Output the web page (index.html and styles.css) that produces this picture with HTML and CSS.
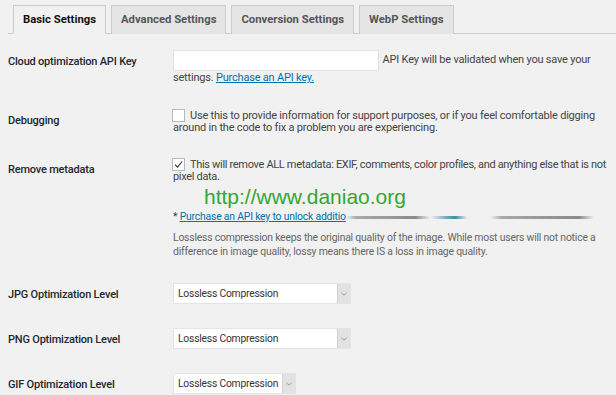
FILE: index.html
```html
<!DOCTYPE html>
<html>
<head>
  <title>Image Optimizer Settings</title>
  <link rel="stylesheet" href="styles.css">
</head>
<body>
  <div class="wrap">
    <nav class="tabs">
      <a class="tab active">Basic Settings</a>
      <a class="tab">Advanced Settings</a>
      <a class="tab">Conversion Settings</a>
      <a class="tab">WebP Settings</a>
    </nav>

    <div class="form">
      <div class="row">
        <div class="label">Cloud optimization API Key</div>
        <div class="field api">
          <input class="text-input" type="text"> API Key will be validated when you save your settings. <a class="link">Purchase an API key.</a>
        </div>
      </div>

      <div class="row">
        <div class="label">Debugging</div>
        <div class="field">
          <span class="checkbox"></span>Use this to provide information for support purposes, or if you feel comfortable digging around in the code to fix a problem you are experiencing.
        </div>
      </div>

      <div class="row">
        <div class="label">Remove metadata</div>
        <div class="field">
          <span class="checkbox"><svg width="11" height="11" viewBox="0 0 11 11"><path d="M2 5.7 L4.5 8.1 L9.1 2.5" fill="none" stroke="#333" stroke-width="1.1"/></svg></span><span class="tight">This will remove ALL metadata: EXIF, comments, color profiles, and anything else that is not pixel data.</span>
          <div class="watermark">http://www.daniao.org</div>
          <div class="note">* <a class="link">Purchase an API key to unlock additio</a><span class="smear"></span></div>
          <p class="desc">Lossless compression keeps the original quality of the image. While most users will not notice a difference in image quality, lossy means there IS a loss in image quality.</p>
        </div>
      </div>

      <div class="row">
        <div class="label">JPG Optimization Level</div>
        <div class="field">
          <div class="select"><span class="select-text">Lossless Compression</span><span class="arrow"><svg width="6" height="4" viewBox="0 0 6 4"><path d="M0.5 0.8 L3 3.2 L5.5 0.8" fill="none" stroke="#999" stroke-width="1"/></svg></span></div>
        </div>
      </div>

      <div class="row">
        <div class="label">PNG Optimization Level</div>
        <div class="field">
          <div class="select"><span class="select-text">Lossless Compression</span><span class="arrow"><svg width="6" height="4" viewBox="0 0 6 4"><path d="M0.5 0.8 L3 3.2 L5.5 0.8" fill="none" stroke="#999" stroke-width="1"/></svg></span></div>
        </div>
      </div>

      <div class="row">
        <div class="label">GIF Optimization Level</div>
        <div class="field">
          <div class="select small"><span class="select-text">Lossless Compression</span><span class="arrow"><svg width="6" height="4" viewBox="0 0 6 4"><path d="M0.5 0.8 L3 3.2 L5.5 0.8" fill="none" stroke="#999" stroke-width="1"/></svg></span></div>
        </div>
      </div>
    </div>
  </div>
</body>
</html>
```

FILE: styles.css
```css
body {
  margin: 0;
  background-color: #f1f1f1;
  font-family: Roboto, "Open Sans", sans-serif;
  font-size: 11px;
  letter-spacing: -0.2px;
  color: #444;
}
.wrap {
  padding: 5px 0 0 8px;
}
.tabs {
  display: flex;
  gap: 5px;
  padding-left: 5px;
  border-bottom: 1px solid #ccc;
}
.tab {
  display: block;
  border: 1px solid #ccc;
  border-bottom: none;
  background-color: #e5e5e5;
  padding: 0 9px;
  line-height: 27px;
  font-size: 11.3px;
  font-weight: 700;
  letter-spacing: 0;
  color: #555;
  margin-bottom: -1px;
}
.tab.active {
  background-color: #f1f1f1;
  color: #111;
  border-bottom: 1px solid #f1f1f1;
}
.form {
  padding-top: 4px;
}
.row {
  display: grid;
  grid-template-columns: 165px minmax(0, 1fr);
  padding: 12px 0;
}
.label {
  font-weight: 500;
  color: #23282d;
  line-height: 14px;
  padding-top: 5px;
}
.field {
  line-height: 12px;
}
.field.api {
  line-height: 14px;
}
.tight {
  letter-spacing: -0.32px;
}
.text-input {
  width: 206px;
  height: 21px;
  box-sizing: border-box;
  border: 1px solid #e0e0e0;
  background-color: #fff;
  margin: 0 1px 0 0;
  vertical-align: middle;
}
.link {
  color: #0073aa;
  text-decoration: underline;
}
.checkbox {
  display: inline-block;
  box-sizing: border-box;
  width: 13px;
  height: 13px;
  border: 1px solid #b4b9be;
  background-color: #fff;
  margin: 0 5px 0 -1px;
  vertical-align: -3px;
}
.checkbox svg {
  display: block;
}
.watermark {
  font-family: "Liberation Sans", Arial, sans-serif;
  font-size: 21px;
  line-height: 22px;
  letter-spacing: 0;
  color: #34a634;
  padding-left: 31px;
  margin-top: 3px;
}
.note {
  font-size: 10.4px;
  line-height: 14px;
  margin-top: 2px;
  white-space: nowrap;
}
.smear {
  display: inline-block;
  width: 248px;
  height: 3px;
  vertical-align: middle;
  background: linear-gradient(to right, rgba(160,160,160,0) 0, #aaa 4%, #8c8c8c 28%, rgba(160,160,160,0) 34%, #7fb0c0 40%, #3f8aa4 44%, rgba(120,160,180,0) 49%, rgba(160,160,160,0) 58%, #a8a8a8 63%, #8a8a8a 94%, rgba(160,160,160,0) 100%);
}
.desc {
  margin: 7px 0 0;
  font-size: 10.4px;
  line-height: 14px;
  color: #666;
}
.select {
  display: flex;
  width: 178px;
  height: 21px;
  box-sizing: border-box;
  background-color: #fff;
  border: 1px solid #e4e4e4;
}
.select.small {
  width: 123px;
}
.select-text {
  flex: 1;
  padding-left: 4px;
  font-size: 10.3px;
  line-height: 19px;
  color: #333;
  white-space: nowrap;
}
.arrow {
  width: 12px;
  display: flex;
  align-items: center;
  justify-content: center;
  background-color: #e2e2e2;
  border-left: 1px solid #d2d2d2;
}
```
